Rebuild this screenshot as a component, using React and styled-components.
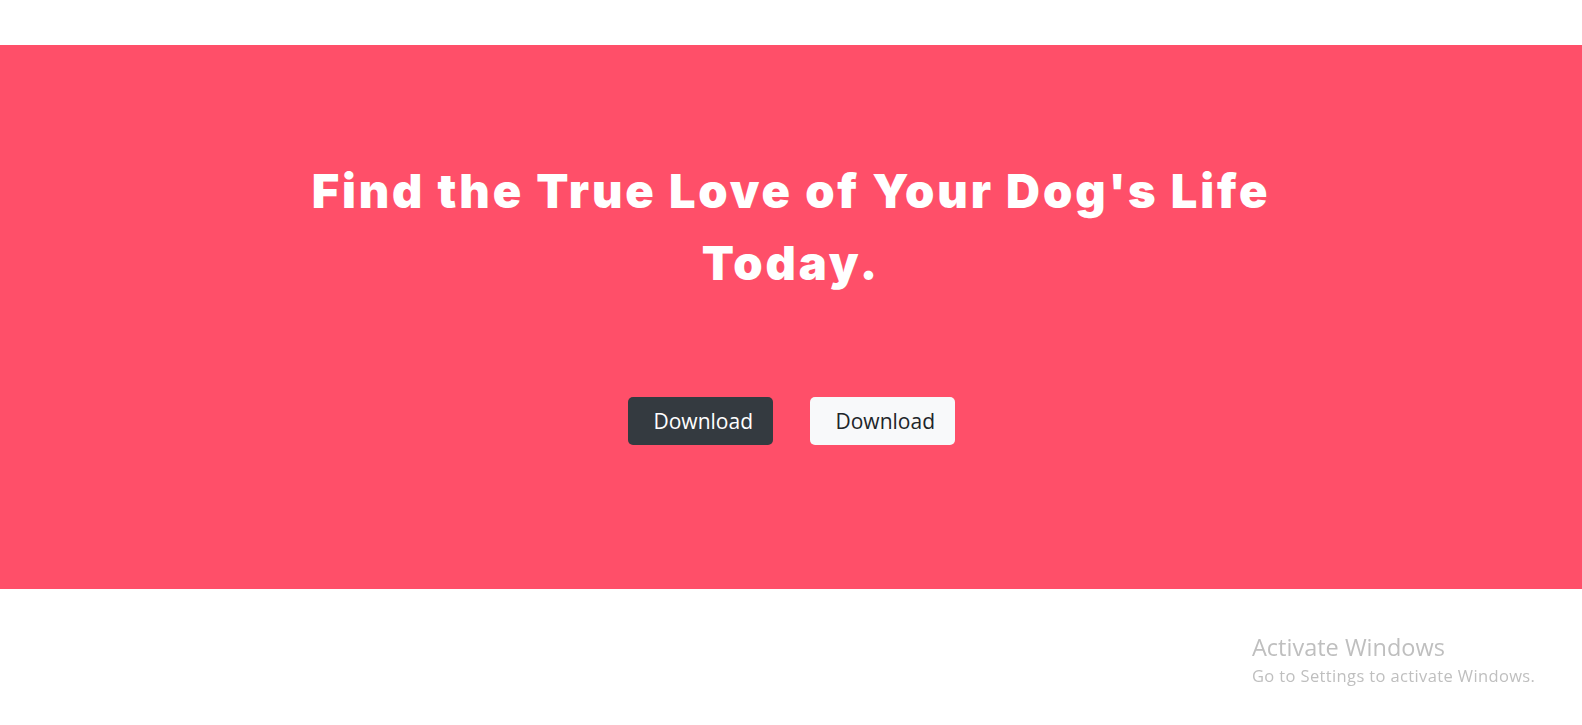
import React from 'react'
import styled, {createGlobalStyle} from 'styled-components'

const GlobalStyle = createGlobalStyle`
    html, body {
        margin: 0;
        padding: 0;
        background: #ffffff;
    }
    body {
        font-family: "Open Sans", "Liberation Sans", sans-serif;
        color: #212529;
    }
`;

const Page = styled.div`
    min-height: 725px;
    display: flex;
    flex-direction: column;
`;

const TopBar = styled.nav`
    height: 45px;
    background: #ffffff;
`;

const Hero = styled.section`
    background: #ff4f69;
    height: 544px;
    box-sizing: border-box;
    padding-top: 110px;
    display: flex;
    flex-direction: column;
    align-items: center;
`;

const Title = styled.h1`
    margin: 0;
    font-family: Inter, "Liberation Sans", sans-serif;
    font-weight: 900;
    font-size: 47px;
    line-height: 72px;
    color: #ffffff;
    text-align: center;
    letter-spacing: 2.85px;
`;

const ButtonRow = styled.div`
    display: flex;
    gap: 37px;
    margin-top: 98px;
`;

const Button = styled.button`
    font-family: "Open Sans", "Liberation Sans", sans-serif;
    font-size: 21px;
    line-height: 30px;
    width: 145px;
    height: 48px;
    padding: 0 16px 0 26px;
    box-sizing: border-box;
    border: none;
    border-radius: 5px;
    text-align: left;
    white-space: nowrap;
    background: ${props => props.dark ? '#343a40' : '#f8f9fa'};
    color: ${props => props.dark ? '#ffffff' : '#212529'};
    cursor: pointer;
`;

const Watermark = styled.div`
    position: fixed;
    left: 1252px;
    top: 634px;
    font-family: "Open Sans", "Liberation Sans", sans-serif;
    color: #bfbfbf;
    pointer-events: none;
`;

const WatermarkTitle = styled.div`
    font-size: 23.5px;
    line-height: 27px;
`;

const WatermarkText = styled.div`
    font-size: 16.5px;
    line-height: 22px;
    margin-top: 4px;
    letter-spacing: 0.37px;
`;

class App extends React.Component {
    render() {
        return (
            <Page>
                <GlobalStyle/>
                <TopBar/>
                <Hero>
                    <Title>Find the True Love of Your Dog's Life<br/>Today.</Title>
                    <ButtonRow>
                        <Button dark>Download</Button>
                        <Button>Download</Button>
                    </ButtonRow>
                </Hero>
                <Watermark>
                    <WatermarkTitle>Activate Windows</WatermarkTitle>
                    <WatermarkText>Go to Settings to activate Windows.</WatermarkText>
                </Watermark>
            </Page>
        )
    }
}

export default App
